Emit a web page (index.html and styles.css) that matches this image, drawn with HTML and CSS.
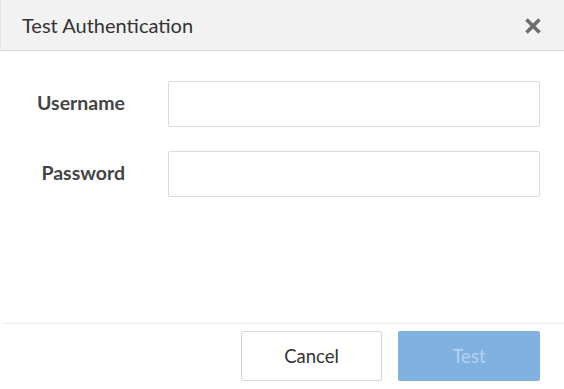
FILE: index.html
```html
<!DOCTYPE html>
<html lang="en">
<head>
    <meta charset="UTF-8">
    <meta name="viewport" content="width=device-width, initial-scale=1.0">
    <title>Test Authentication</title>
    <link rel="stylesheet" href="styles.css">
</head>
<body>
    <div class="dialog">
        <div class="header">
            <h1>Test Authentication</h1>
            <svg class="close" width="18" height="18" viewBox="0 0 18 18">
                <path d="M2.5 2.5 L15.5 15.5 M15.5 2.5 L2.5 15.5" stroke="#6e6e6e" stroke-width="3.6" stroke-linecap="butt" fill="none"/>
            </svg>
        </div>

        <div class="content">
            <div class="form-row">
                <label for="username">Username</label>
                <input type="text" id="username">
            </div>
            <div class="form-row">
                <label for="password">Password</label>
                <input type="password" id="password">
            </div>
        </div>

        <div class="footer">
            <button class="btn btn-cancel">Cancel</button>
            <button class="btn btn-primary" disabled>Test</button>
        </div>
    </div>
</body>
</html>
```

FILE: styles.css
```css
body {
    margin: 0;
    font-family: Lato, "Open Sans", sans-serif;
    background-color: white;
    color: #333;
}
.dialog {
    width: 564px;
    height: 389px;
    display: flex;
    flex-direction: column;
}
.header {
    height: 50px;
    background-color: #f2f2f2;
    border-bottom: 1px solid #dcdcdc;
    border-left: 1px solid #e6e6e6;
    display: flex;
    align-items: center;
    justify-content: space-between;
    padding: 0 22px 0 21px;
}
.header h1 {
    margin: 0;
    font-size: 20px;
    font-weight: normal;
    color: #333;
}
.close {
    display: block;
    margin-top: 1px;
}
.content {
    height: 272px;
    box-sizing: border-box;
    padding: 30px 24px 0 0;
    display: flex;
    flex-direction: column;
    gap: 24px;
}
.form-row {
    display: grid;
    grid-template-columns: 125px 1fr;
    column-gap: 43px;
    align-items: center;
}
label {
    text-align: right;
    font-weight: bold;
    font-size: 19.5px;
    color: #444;
    margin-top: -4px;
}
input {
    height: 46px;
    box-sizing: border-box;
    border: 1px solid #dadada;
    border-radius: 2px;
    padding: 0 10px;
    font-size: 16px;
}
.footer {
    border-top: 1px solid #ececec;
    margin-left: 3px;
    padding: 7px 24px 0 0;
    display: flex;
    justify-content: flex-end;
    gap: 16px;
}
.btn {
    width: 142px;
    height: 50px;
    background: white;
    border: 1px solid #d6d6d6;
    border-radius: 2px;
    font-family: inherit;
    font-size: 18.5px;
    color: #333;
}
.btn-cancel {
    width: 141px;
}
.btn-primary {
    background-color: #80b1e1;
    border-color: #80b1e1;
    color: #b5d3f0;
}
```
